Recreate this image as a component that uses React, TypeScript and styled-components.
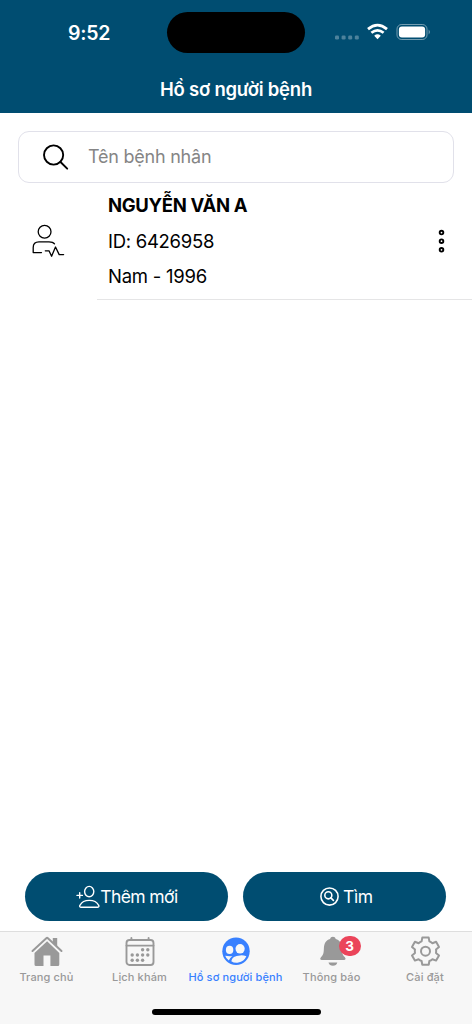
import React from 'react';
import styled, { createGlobalStyle } from 'styled-components';
import { IoSearchCircleOutline } from 'react-icons/io5';

const GlobalStyle = createGlobalStyle`
  * { box-sizing: border-box; }
  body { margin: 0; background: #fff; font-family: Inter, "Noto Sans", sans-serif; color: #000; }
  svg { display: block; flex: none; }
`;

const Screen = styled.div`
  width: 472px;
  height: 1024px;
  display: flex;
  flex-direction: column;
  overflow: hidden;
`;

const Header = styled.header`
  height: 113px;
  background: #004d71;
  color: #fff;
`;

const StatusBar = styled.div`
  display: grid;
  grid-template-columns: 167px 138px 167px;
  height: 65px;
  align-items: center;
`;

const Clock = styled.div`
  padding-left: 68px;
  font-size: 19.5px;
  line-height: 24px;
  font-weight: 600;
  letter-spacing: -0.2px;
`;

const Island = styled.div`
  height: 41px;
  border-radius: 21px;
  background: #000;
`;

const StatusIcons = styled.div`
  display: flex;
  align-items: center;
  padding-left: 30px;
`;

const Title = styled.h1`
  margin: 0;
  padding-top: 12px;
  text-align: center;
  font-size: 18.5px;
  line-height: 24px;
  font-weight: 600;
  letter-spacing: -0.22px;
`;

const SearchBox = styled.label`
  display: flex;
  align-items: center;
  height: 52px;
  margin: 18px 18px 0;
  padding-left: 22px;
  gap: 18px;
  border: 1px solid #e1e1ea;
  border-radius: 11px;
`;

const SearchInput = styled.input`
  flex: 1;
  min-width: 0;
  border: 0;
  padding: 0;
  outline: 0;
  background: none;
  font: 400 18px/24px Inter, "Noto Sans", sans-serif;
  letter-spacing: -0.23px;
  &::placeholder { color: #858585; opacity: 1; }
`;

const PatientRow = styled.article`
  display: flex;
  height: 117px;
`;

const Avatar = styled.div`
  width: 97px;
  padding: 40px 0 0 31px;
`;

const Details = styled.div`
  display: flex;
  flex: 1;
  justify-content: space-between;
  align-items: center;
  padding: 0 24px 0 11px;
  border-bottom: 1px solid #e5e5e6;
`;

const Lines = styled.div`
  height: 100%;
  padding-top: 5px;
`;

const Line = styled.div<{ $strong?: boolean; $spacing: number }>`
  height: ${(p) => (p.$strong ? 36 : 35)}px;
  line-height: 35px;
  font-size: 18.5px;
  white-space: nowrap;
  font-weight: ${(p) => (p.$strong ? 700 : 400)};
  letter-spacing: ${(p) => p.$spacing}px;
`;

const Actions = styled.div`
  display: grid;
  grid-template-columns: 203px 203px;
  gap: 15px;
  margin: auto 0 10px 25.4px;
`;

const ActionButton = styled.button<{ $gap: number; $spacing: number }>`
  display: flex;
  align-items: center;
  justify-content: center;
  gap: ${(p) => p.$gap}px;
  height: 49px;
  padding: 0;
  border: 0;
  border-radius: 25px;
  background: #004d71;
  color: #fff;
  font: 400 17.5px/24px Inter, "Noto Sans", sans-serif;
  letter-spacing: ${(p) => p.$spacing}px;
`;

const BottomArea = styled.footer`
  height: 93px;
  display: flex;
  flex-direction: column;
  background: #f7f7f7;
  border-top: 1px solid #dedede;
`;

const Tabs = styled.nav`
  display: grid;
  grid-template-columns: 93px 93px 99px 93px 94px;
`;

const Tab = styled.a<{ $active?: boolean }>`
  display: flex;
  flex-direction: column;
  align-items: center;
  padding-top: 3px;
  color: ${(p) => (p.$active ? '#3880ff' : '#999')};
`;

const TabIcon = styled.div`
  position: relative;
  width: 32px;
  height: 32px;
`;

const TabLabel = styled.span`
  margin-top: 2px;
  font-size: 11px;
  line-height: 16px;
  font-weight: 500;
  white-space: nowrap;
  letter-spacing: 0.14px;
`;

const Badge = styled.span`
  position: absolute;
  left: 23px;
  top: 1px;
  width: 22px;
  height: 20px;
  border-radius: 10px;
  background: #eb445a;
  color: #fff;
  text-align: center;
  font-size: 13.5px;
  line-height: 20px;
  font-weight: 700;
`;

const HomeIndicator = styled.div`
  width: 169px;
  height: 6px;
  margin: auto auto 9px;
  border-radius: 3px;
  background: #000;
`;

function StatusGlyphs() {
  return (
    <svg width="98" height="22" viewBox="0 0 98 22" fill="#fff">
      <g fillOpacity=".3">
        <rect y="13.5" width="4" height="4" rx="1.3" />
        <rect x="6.6" y="13.5" width="4" height="4" rx="1.3" />
        <rect x="13.2" y="13.5" width="4" height="4" rx="1.3" />
        <rect x="19.8" y="13.5" width="4" height="4" rx="1.3" />
      </g>
      <g fill="none" stroke="#fff" strokeWidth="2.7">
        <path d="M33 7.1Q42.5-1 52 7.1" />
        <path d="M36.4 10.8Q42.5 5.8 48.6 10.8" />
      </g>
      <path d="M39.2 13.7Q42.5 11 45.8 13.7L42.5 17.2Z" />
      <rect x="62" y="2.5" width="30" height="15" rx="4.6" fill="none" stroke="#fff" strokeOpacity=".45" />
      <rect x="63.9" y="4.4" width="26.2" height="11.2" rx="3" />
      <path d="M93.7 7.5q2.2 2.5 0 5z" fillOpacity=".5" />
    </svg>
  );
}

function SearchGlyph() {
  return (
    <svg width="29" height="29" viewBox="0 0 29 29" fill="none" stroke="#000" strokeWidth="1.9" strokeLinecap="round">
      <circle cx="12.6" cy="12" r="9.6" />
      <path d="M19.5 19 26.2 25.7" />
    </svg>
  );
}

function PatientGlyph() {
  return (
    <svg width="36" height="36" viewBox="0 0 36 36" fill="none" stroke="#000" strokeWidth="1.3" strokeLinecap="round" strokeLinejoin="round">
      <circle cx="13.6" cy="8.8" r="6.4" />
      <path d="M10.5 29.6H2.2V24.5Q2.2 18.8 8 18.8H18Q22 18.8 23.5 20.8" />
      <path d="M14.3 27.8H18L20.6 33.2 24.5 24 28.2 31.6H32.6" />
    </svg>
  );
}

function MoreGlyph() {
  return (
    <svg width="13" height="26" viewBox="0 0 13 26" fill="none" stroke="#000" strokeWidth="1.9">
      <circle cx="6.5" cy="4.6" r="1.8" />
      <circle cx="6.5" cy="13.2" r="1.8" />
      <circle cx="6.5" cy="21.8" r="1.8" />
    </svg>
  );
}

function AddPersonGlyph() {
  return (
    <svg width="24" height="24" viewBox="0 0 24 24" fill="none" stroke="#fff" strokeWidth="1.4" strokeLinecap="round" strokeLinejoin="round">
      <ellipse cx="13.2" cy="6.6" rx="4.6" ry="5.2" />
      <path d="M4.8 22.2H21.8C23 22.2 23.2 21.3 22.6 20.2C20.9 16.9 17.5 15.4 13.3 15.4S5.7 16.9 4 20.2C3.4 21.3 3.6 22.2 4.8 22.2Z" />
      <path d="M1 10.4H6.4M3.7 7.7V13.1" />
    </svg>
  );
}

function HomeGlyph() {
  return (
    <svg width="32" height="32" viewBox="0 0 32 32" fill="currentColor">
      <path d="M3.5 18 16.1 6.2 28.3 18V29.5Q28.3 31 26.8 31H19.4V20.5H12.5V31H5Q3.5 31 3.5 29.5Z" />
      <path d="M21.8 2.9H26.2V12L21.8 8Z" />
      <path d="M1.5 16 15.3 3.2Q16.1 2.5 16.9 3.2L30.5 16" fill="none" stroke="currentColor" strokeWidth="2" strokeLinecap="round" />
    </svg>
  );
}

function CalendarGlyph() {
  return (
    <svg width="32" height="32" viewBox="0 0 32 32" fill="currentColor">
      <rect x="2.5" y="5" width="27" height="25" rx="3" fill="none" stroke="currentColor" strokeWidth="1.9" />
      <path d="M2.5 10.6H29.5M7.4 5V3M24.6 5V3" fill="none" stroke="currentColor" strokeWidth="1.9" strokeLinecap="round" />
      <circle cx="18.6" cy="14.8" r="1.7" /><circle cx="23.8" cy="14.8" r="1.7" />
      <circle cx="8.2" cy="20" r="1.7" /><circle cx="13.4" cy="20" r="1.7" />
      <circle cx="18.6" cy="20" r="1.7" /><circle cx="23.8" cy="20" r="1.7" />
      <circle cx="8.2" cy="25.2" r="1.7" /><circle cx="13.4" cy="25.2" r="1.7" /><circle cx="18.6" cy="25.2" r="1.7" />
    </svg>
  );
}

function PeopleGlyph() {
  return (
    <svg width="32" height="32" viewBox="0 0 32 32" fill="#f7f7f7">
      <circle cx="16" cy="16.3" r="13.7" fill="currentColor" />
      <ellipse cx="9.6" cy="14.9" rx="3.7" ry="4.1" />
      <ellipse cx="20.1" cy="13.8" rx="4.6" ry="4.8" />
      <path d="M5.2 20.7Q8.9 21.5 12.4 21Q10 22.6 8.8 25.6Q6.2 23.6 5.2 20.7Z" />
      <path d="M11.3 26.2Q12.2 20.6 20.2 20.4Q23.6 20.2 26.4 21.3Q24 26.5 18.4 27.6Q14.3 28.3 11.3 26.2Z" />
    </svg>
  );
}

function BellGlyph() {
  return (
    <svg width="32" height="32" viewBox="0 0 32 32" fill="currentColor">
      <path d="M16.9 1.8C18.5 1.8 19.3 2.7 19.7 3.9C24 5 25.7 8.7 25.9 13C26.1 18 26.3 19.6 28.7 22.1C30.2 23.7 29.7 25.1 28 25.1H5.8C4.1 25.1 3.6 23.7 5.1 22.1C7.5 19.6 7.7 18 7.9 13C8.1 8.7 9.8 5 14.1 3.9C14.5 2.7 15.3 1.8 16.9 1.8Z" />
      <path d="M12.5 27.5H21.3Q20.4 30.8 16.9 30.8T12.5 27.5Z" />
    </svg>
  );
}

function GearGlyph() {
  return (
    <svg width="32" height="32" viewBox="0 0 32 32" fill="none" stroke="currentColor" strokeWidth="2" strokeLinejoin="round">
      <circle cx="16.5" cy="16.2" r="4.5" />
      <path d="M13.3 2.6H19.7L20.4 6.4Q22 7 23.4 8.2L27.1 6.8 30 11.9 27 14.4Q27.4 16.2 27 18L30 20.5 27.1 25.6 23.4 24.2Q22 25.4 20.4 26L19.7 29.8H13.3L12.6 26Q11 25.4 9.6 24.2L5.9 25.6 3 20.5 6 18Q5.6 16.2 6 14.4L3 11.9 5.9 6.8 9.6 8.2Q11 7 12.6 6.4Z" />
    </svg>
  );
}

export default function App() {
  return (
    <>
      <GlobalStyle />
      <Screen>
        <Header>
          <StatusBar>
            <Clock>9:52</Clock>
            <Island />
            <StatusIcons><StatusGlyphs /></StatusIcons>
          </StatusBar>
          <Title>Hồ sơ người bệnh</Title>
        </Header>
        <SearchBox>
          <SearchGlyph />
          <SearchInput placeholder="Tên bệnh nhân" />
        </SearchBox>
        <PatientRow>
          <Avatar><PatientGlyph /></Avatar>
          <Details>
            <Lines>
              <Line $strong $spacing={-0.33}>NGUYỄN VĂN A</Line>
              <Line $spacing={-0.28}>ID: 6426958</Line>
              <Line $spacing={-0.25}>Nam - 1996</Line>
            </Lines>
            <MoreGlyph />
          </Details>
        </PatientRow>
        <Actions>
          <ActionButton $gap={0} $spacing={-0.6}><AddPersonGlyph />Thêm mới</ActionButton>
          <ActionButton $gap={1} $spacing={-0.3}><IoSearchCircleOutline size={25} />Tìm</ActionButton>
        </Actions>
        <BottomArea>
          <Tabs>
            <Tab>
              <TabIcon><HomeGlyph /></TabIcon>
              <TabLabel>Trang chủ</TabLabel>
            </Tab>
            <Tab>
              <TabIcon><CalendarGlyph /></TabIcon>
              <TabLabel>Lịch khám</TabLabel>
            </Tab>
            <Tab $active>
              <TabIcon><PeopleGlyph /></TabIcon>
              <TabLabel>Hồ sơ người bệnh</TabLabel>
            </Tab>
            <Tab>
              <TabIcon><BellGlyph /><Badge>3</Badge></TabIcon>
              <TabLabel>Thông báo</TabLabel>
            </Tab>
            <Tab>
              <TabIcon><GearGlyph /></TabIcon>
              <TabLabel>Cài đặt</TabLabel>
            </Tab>
          </Tabs>
          <HomeIndicator />
        </BottomArea>
      </Screen>
    </>
  );
}
